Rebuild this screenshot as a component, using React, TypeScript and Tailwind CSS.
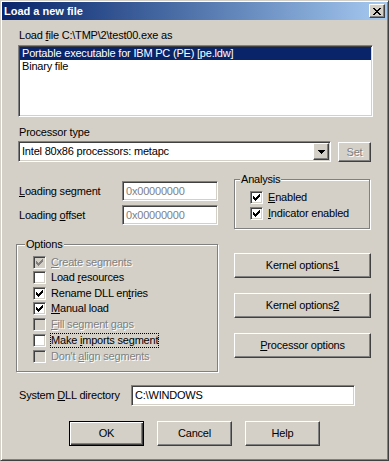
import type { ReactNode } from 'react';

const sunken =
  'border border-t-[#808080] border-l-[#808080] border-r-white border-b-white shadow-[inset_1px_1px_0_#404040,inset_-1px_-1px_0_#d4d0c8]';
const raised =
  'border border-t-white border-l-white border-r-[#404040] border-b-[#404040] shadow-[inset_-1px_-1px_0_#808080]';
const grayText = 'text-[#808080] [text-shadow:1px_1px_0_#fff]';

function CheckMark({ color }: { color: string }) {
  return (
    <svg width="7" height="7" viewBox="0 0 7 7" shapeRendering="crispEdges" className="absolute left-[2px] top-[2px]">
      <path
        fill={color}
        d="M6 0h1v1H6zM5 1h2v1H5zM0 2h1v1H0zM4 2h3v1H4zM0 3h2v1H0zM3 3h3v1H3zM0 4h5v1H0zM1 5h3v1H1zM2 6h1v1H2z"
      />
    </svg>
  );
}

function CheckRow({
  checked,
  disabled,
  focus,
  h,
  children,
}: {
  checked?: boolean;
  disabled?: boolean;
  focus?: boolean;
  h: string;
  children: ReactNode;
}) {
  return (
    <div className={`flex items-start ${h}`}>
      <div className={`relative w-[13px] h-[13px] shrink-0 ${sunken} ${disabled ? 'bg-[#d4d0c8]' : 'bg-white'}`}>
        {checked && <CheckMark color={disabled ? '#808080' : '#000'} />}
      </div>
      <span
        className={`ml-[5px] whitespace-nowrap ${disabled ? grayText : ''} ${
          focus ? 'outline-1 outline-dotted outline-black' : ''
        }`}
      >
        {children}
      </span>
    </div>
  );
}

function Group({
  label,
  labelLeft,
  className,
  children,
}: {
  label: string;
  labelLeft: string;
  className: string;
  children: ReactNode;
}) {
  return (
    <div className={`relative border border-[#808080] shadow-[1px_1px_0_#fff,inset_1px_1px_0_#fff] ${className}`}>
      <span className={`absolute -top-[7px] ${labelLeft} bg-[#d4d0c8] px-[1px]`}>{label}</span>
      {children}
    </div>
  );
}

function Button({ children, className = '', isDefault = false }: { children: ReactNode; className?: string; isDefault?: boolean }) {
  const edge = isDefault
    ? 'border border-black shadow-[inset_1px_1px_0_#fff,inset_-1px_-1px_0_#404040,inset_-2px_-2px_0_#808080]'
    : raised;
  return <div className={`flex items-center justify-center h-[25px] ${edge} ${className}`}>{children}</div>;
}

export default function App() {
  return (
    <div className="w-[389px] h-[461px] bg-[#d4d0c8] p-[1px] border border-t-[#d4d0c8] border-l-[#d4d0c8] border-r-[#404040] border-b-[#404040] shadow-[inset_1px_1px_0_#fff,inset_-1px_-1px_0_#808080] font-['Liberation_Sans',Arial,sans-serif] text-[11px] leading-[13px] text-black select-none">
      <div className="flex items-center h-[18px] pl-[2px] pr-[2px] bg-linear-to-r from-[#0a246a] to-[#a6caf0]">
        <span className="flex-1 font-bold text-white">Load a new file</span>
        <div className={`flex items-center justify-center w-[16px] h-[14px] bg-[#d4d0c8] ${raised}`}>
          <svg width="8" height="7" viewBox="0 0 8 7" shapeRendering="crispEdges">
            <path
              fill="#000"
              d="M0 0h2v1H0zM6 0h2v1H6zM1 1h2v1H1zM5 1h2v1H5zM2 2h4v1H2zM3 3h2v1H3zM2 4h4v1H2zM1 5h2v1H1zM5 5h2v1H5zM0 6h2v1H0zM6 6h2v1H6z"
            />
          </svg>
        </div>
      </div>

      <div className="flex flex-col pl-[14px] pr-[14px] tracking-[-0.2px]">
        <div className="mt-[9px] ml-[3px]">
          Load <u>f</u>ile C:\TMP\2\test00.exe as
        </div>
        <div className={`mt-[3px] ml-[2px] h-[72px] bg-white ${sunken}`}>
          <div className="mt-[1px] mx-[1px] h-[13px] pl-[2px] bg-[#0a246a] text-white whitespace-nowrap">
            Portable executable for IBM PC (PE) [pe.ldw]
          </div>
          <div className="mx-[1px] h-[13px] pl-[2px]">Binary file</div>
        </div>

        <div className="mt-[9px] ml-[3px]">Processor type</div>
        <div className="flex items-start mt-[2px] ml-[2px]">
          <div className={`flex items-stretch w-[313px] h-[21px] bg-white ${sunken}`}>
            <span className="flex-1 pl-[3px] self-center">Intel 80x86 processors: metapc</span>
            <div className={`flex items-center justify-center w-[16px] m-[1px] bg-[#d4d0c8] ${raised}`}>
              <svg width="7" height="4" viewBox="0 0 7 4" shapeRendering="crispEdges">
                <path fill="#000" d="M0 0h7v1H0zM1 1h5v1H1zM2 2h3v1H2zM3 3h1v1H3z" />
              </svg>
            </div>
          </div>
          <Button className={`ml-[7px] mt-[1px] w-[33px] !h-[20px] ${grayText}`}>Set</Button>
        </div>

        <div className="flex items-start">
          <div className="flex flex-col w-[202px]">
            <div className="flex items-center h-[20px] mt-[19px]">
              <span className="w-[106px] pl-[3px]">
                <u>L</u>oading segment
              </span>
              <div className={`flex items-center w-[96px] h-[20px] pl-[3px] bg-white text-[#808080] ${sunken}`}>0x00000000</div>
            </div>
            <div className="flex items-center h-[20px] mt-[4px]">
              <span className="w-[106px] pl-[3px]">
                Loading <u>o</u>ffset
              </span>
              <div className={`flex items-center w-[96px] h-[20px] pl-[3px] bg-white text-[#808080] ${sunken}`}>0x00000000</div>
            </div>
            <Group label="Options" labelLeft="left-[8px]" className="mt-[19px] h-[128px] pt-[11px] pl-[16px]">
              <CheckRow checked disabled h="h-[15px]">
                <u>C</u>reate segments
              </CheckRow>
              <CheckRow h="h-[16px]">
                Load <u>r</u>esources
              </CheckRow>
              <CheckRow checked h="h-[15px]">
                Rename DLL en<u>t</u>ries
              </CheckRow>
              <CheckRow checked h="h-[16px]">
                <u>M</u>anual load
              </CheckRow>
              <CheckRow disabled h="h-[16px]">
                <u>F</u>ill segment gaps
              </CheckRow>
              <CheckRow focus h="h-[16px]">
                Make <u>i</u>mports segment
              </CheckRow>
              <CheckRow disabled h="h-[13px]">
                Don't <u>a</u>lign segments
              </CheckRow>
            </Group>
          </div>

          <div className="flex flex-col ml-[16px] w-[137px]">
            <Group label="Analysis" labelLeft="left-[5px]" className="mt-[17px] w-[136px] h-[50px] pt-[11px] pl-[15px]">
              <CheckRow checked h="h-[16px]">
                <u>E</u>nabled
              </CheckRow>
              <CheckRow checked h="h-[13px]">
                <u>I</u>ndicator enabled
              </CheckRow>
            </Group>
            <Button className="mt-[24px]">
              Kernel options<u>1</u>
            </Button>
            <Button className="mt-[15px]">
              Kernel options<u>2</u>
            </Button>
            <Button className="mt-[15px]">
              <u>P</u>rocessor options
            </Button>
          </div>
        </div>

        <div className="flex items-center mt-[13px]">
          <span className="w-[115px] pl-[3px]">
            System <u>D</u>LL directory
          </span>
          <div className={`flex items-center w-[224px] h-[21px] pl-[3px] bg-white ${sunken}`}>C:\WINDOWS</div>
        </div>

        <div className="flex justify-center gap-[13px] mt-[15px]">
          <Button isDefault className="w-[75px]">
            OK
          </Button>
          <Button className="w-[75px]">Cancel</Button>
          <Button className="w-[75px]">Help</Button>
        </div>
      </div>
    </div>
  );
}
